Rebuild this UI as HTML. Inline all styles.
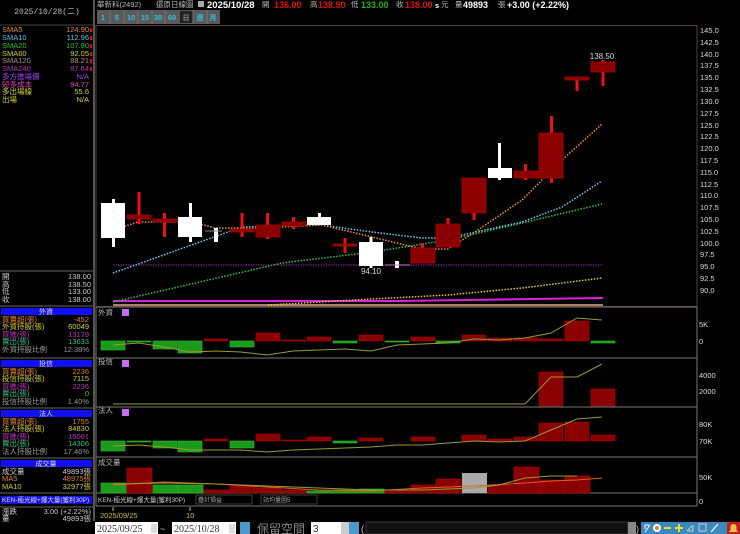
<!DOCTYPE html>
<html><head><meta charset="utf-8"><style>
html,body{margin:0;padding:0;background:#000;width:740px;height:534px;overflow:hidden}
svg{display:block}
text{font-family:"Liberation Sans","Noto Sans CJK TC",sans-serif;font-size:7.5px}
.m{font-family:"Liberation Mono","Noto Sans CJK TC",monospace}
</style></head><body>
<svg width="740" height="534" viewBox="0 0 740 534" xmlns="http://www.w3.org/2000/svg">
<rect width="740" height="534" fill="#000"/>
<!-- left panel separators -->
<rect x="93" y="0" width="2" height="521" fill="#555"/>
<text x="47" y="14" fill="#bbb" text-anchor="middle" class="m" style="font-size:8px">2025/10/28(二)</text>
<line x1="0" y1="25" x2="93" y2="25" stroke="#444"/>
<g class="m" style="font-size:7px">
<text x="2" y="32" fill="#e09040">SMA5</text><text x="89" y="32" fill="#e09040" text-anchor="end">124.90</text>
<text x="2" y="40" fill="#60c0e0">SMA10</text><text x="89" y="40" fill="#60c0e0" text-anchor="end">112.96</text>
<text x="2" y="48" fill="#30c030">SMA20</text><text x="89" y="48" fill="#30c030" text-anchor="end">107.80</text>
<text x="2" y="56" fill="#d0d030">SMA60</text><text x="89" y="56" fill="#d0d030" text-anchor="end">92.05</text>
<text x="2" y="63" fill="#b09080">SMA120</text><text x="89" y="63" fill="#b09080" text-anchor="end">88.21</text>
<text x="2" y="71" fill="#c030c0">SMA240</text><text x="89" y="71" fill="#c030c0" text-anchor="end">87.64</text>
<text x="2" y="79" fill="#a040f0">多方進場價</text><text x="89" y="79" fill="#a040f0" text-anchor="end">N/A</text>
<text x="2" y="87" fill="#e040c0">短多成本</text><text x="89" y="87" fill="#e040c0" text-anchor="end">94.77</text>
<text x="2" y="94" fill="#d0d030">多出場線</text><text x="89" y="94" fill="#d0d030" text-anchor="end">55.6</text>
<text x="2" y="102" fill="#d0d030">出場</text><text x="89" y="102" fill="#d0d030" text-anchor="end">N/A</text>
</g>
<g fill="#e00"><rect x="90" y="28" width="2" height="4"/><rect x="90" y="36" width="2" height="4"/><rect x="90" y="44" width="2" height="4"/><rect x="90" y="52" width="2" height="4"/><rect x="90" y="59" width="2" height="4"/><rect x="90" y="67" width="2" height="4"/></g>
<line x1="0" y1="271" x2="93" y2="271" stroke="#666"/>
<g class="m" style="font-size:7px" fill="#ccc">
<text x="2" y="279">開</text><text x="91" y="279" text-anchor="end">138.00</text>
<text x="2" y="287">高</text><text x="91" y="287" text-anchor="end">138.50</text>
<text x="2" y="294">低</text><text x="91" y="294" text-anchor="end">133.00</text>
<text x="2" y="302">收</text><text x="91" y="302" text-anchor="end">138.00</text>
</g>
<line x1="0" y1="306" x2="93" y2="306" stroke="#666"/>
<rect x="1" y="308" width="91" height="7" fill="#1010f0"/><text x="46" y="314" fill="#ddd" text-anchor="middle" style="font-size:7px">外資</text>
<g class="m" style="font-size:7px">
<text x="2" y="322" fill="#e08030">買賣超(張)</text><text x="89" y="322" fill="#e08030" text-anchor="end">-452</text>
<text x="2" y="329" fill="#d0d030">外資持股(張)</text><text x="89" y="329" fill="#d0d030" text-anchor="end">60049</text>
<text x="2" y="337" fill="#c030c0">買進(張)</text><text x="89" y="337" fill="#c030c0" text-anchor="end">13179</text>
<text x="2" y="344" fill="#30c080">賣出(張)</text><text x="89" y="344" fill="#30c080" text-anchor="end">13633</text>
<text x="2" y="352" fill="#999">外資持股比例</text><text x="89" y="352" fill="#999" text-anchor="end">12.38%</text>
</g>
<line x1="0" y1="358" x2="93" y2="358" stroke="#666"/>
<rect x="1" y="360" width="91" height="7" fill="#1010f0"/><text x="46" y="366" fill="#ddd" text-anchor="middle" style="font-size:7px">投信</text>
<g class="m" style="font-size:7px">
<text x="2" y="374" fill="#e08030">買賣超(張)</text><text x="89" y="374" fill="#e08030" text-anchor="end">2236</text>
<text x="2" y="381" fill="#d0d030">投信持股(張)</text><text x="89" y="381" fill="#d0d030" text-anchor="end">7115</text>
<text x="2" y="389" fill="#c030c0">買進(張)</text><text x="89" y="389" fill="#c030c0" text-anchor="end">2236</text>
<text x="2" y="396" fill="#30c080">賣出(張)</text><text x="89" y="396" fill="#30c080" text-anchor="end">0</text>
<text x="2" y="404" fill="#999">投信持股比例</text><text x="89" y="404" fill="#999" text-anchor="end">1.40%</text>
</g>
<line x1="0" y1="408" x2="93" y2="408" stroke="#666"/>
<rect x="1" y="410" width="91" height="7" fill="#1010f0"/><text x="46" y="416" fill="#ddd" text-anchor="middle" style="font-size:7px">法人</text>
<g class="m" style="font-size:7px">
<text x="2" y="424" fill="#e08030">買賣超(張)</text><text x="89" y="424" fill="#e08030" text-anchor="end">1755</text>
<text x="2" y="431" fill="#d0d030">法人持股(張)</text><text x="89" y="431" fill="#d0d030" text-anchor="end">84830</text>
<text x="2" y="439" fill="#c030c0">買進(張)</text><text x="89" y="439" fill="#c030c0" text-anchor="end">16061</text>
<text x="2" y="446" fill="#30c080">賣出(張)</text><text x="89" y="446" fill="#30c080" text-anchor="end">14306</text>
<text x="2" y="454" fill="#999">法人持股比例</text><text x="89" y="454" fill="#999" text-anchor="end">17.46%</text>
</g>
<line x1="0" y1="458" x2="93" y2="458" stroke="#666"/>
<rect x="1" y="460" width="91" height="7" fill="#1010f0"/><text x="46" y="466" fill="#ddd" text-anchor="middle" style="font-size:7px">成交量</text>
<g class="m" style="font-size:7px">
<text x="2" y="474" fill="#ccc">成交量</text><text x="91" y="474" fill="#ccc" text-anchor="end">49893張</text>
<text x="2" y="481" fill="#e08030">MA5</text><text x="91" y="481" fill="#e08030" text-anchor="end">48975張</text>
<text x="2" y="489" fill="#d0d030">MA10</text><text x="91" y="489" fill="#d0d030" text-anchor="end">32977張</text>
</g>
<line x1="0" y1="493" x2="93" y2="493" stroke="#666"/>
<rect x="1" y="496" width="91" height="8" fill="#1010e0"/><text x="2" y="502" fill="#ddd" style="font-size:6.5px">KEN-極光線+爆大量(獲利30P)</text>
<line x1="0" y1="507" x2="93" y2="507" stroke="#666"/>
<g class="m" style="font-size:7px" fill="#ccc">
<text x="2" y="514">漲跌</text><text x="91" y="514" text-anchor="end">3.00 (+2.22%)</text>
<text x="2" y="521">量</text><text x="91" y="521" text-anchor="end">49893張</text>
</g>

<!-- top bar -->
<g style="font-size:7.5px">
<text x="97" y="7" fill="#bbb">華新科(2492)</text>
<text x="156" y="7" fill="#bbb">還原日線圖</text>
<rect x="198" y="1" width="6" height="6" fill="#aaa"/>
<text x="207" y="8" fill="#fff" style="font-size:9.5px;font-weight:bold">2025/10/28</text>
<text x="262" y="7" fill="#bbb">開</text><text x="274" y="8" fill="#e01010" style="font-size:9px;font-weight:bold">136.00</text>
<text x="310" y="7" fill="#bbb">高</text><text x="318" y="8" fill="#e01010" style="font-size:9px;font-weight:bold">138.50</text>
<text x="351" y="7" fill="#bbb">低</text><text x="361" y="8" fill="#20b020" style="font-size:9px;font-weight:bold">133.00</text>
<text x="396" y="7" fill="#bbb">收</text><text x="405" y="8" fill="#e01010" style="font-size:9px;font-weight:bold">138.00</text>
<text x="435" y="8" fill="#fff" style="font-weight:bold">s</text><text x="441" y="7" fill="#bbb">元</text>
<text x="455" y="7" fill="#bbb">量</text><text x="463" y="8" fill="#fff" style="font-size:9px;font-weight:bold">49893</text>
<text x="498" y="7" fill="#bbb">張</text>
<text x="507" y="8" fill="#fff" style="font-size:9px;font-weight:bold">+3.00 (+2.22%)</text>
</g>
<!-- buttons -->
<rect x="97" y="10" width="123" height="14" fill="#5a5a5a"/>
<g fill="#30c0e0" style="font-size:8px;font-weight:bold" text-anchor="middle">
<text x="103" y="20">1</text><text x="117" y="20">5</text><text x="131" y="20">10</text><text x="145" y="20">15</text><text x="158" y="20">30</text><text x="172" y="20">60</text>
<rect x="180" y="11" width="13" height="12" fill="#222"/><text x="186" y="20" fill="#888" style="font-size:7px">日</text>
<text x="200" y="20" style="font-size:7px">週</text><text x="213" y="20" style="font-size:7px">月</text>
</g>
<g stroke="#777"><line x1="110" y1="10" x2="110" y2="24"/><line x1="124" y1="10" x2="124" y2="24"/><line x1="138" y1="10" x2="138" y2="24"/><line x1="152" y1="10" x2="152" y2="24"/><line x1="165" y1="10" x2="165" y2="24"/><line x1="193" y1="10" x2="193" y2="24"/><line x1="207" y1="10" x2="207" y2="24"/></g>

<!-- frames -->
<rect x="96" y="25.5" width="601" height="281" fill="none" stroke="#5a3a4a"/>
<g stroke="#777"><line x1="96" y1="307" x2="697" y2="307"/><line x1="96" y1="358" x2="697" y2="358"/><line x1="96" y1="407" x2="697" y2="407"/><line x1="96" y1="457" x2="697" y2="457"/><line x1="96" y1="493" x2="697" y2="493"/><line x1="96" y1="506" x2="697" y2="506"/><line x1="96" y1="307" x2="96" y2="506"/><line x1="697" y1="307" x2="697" y2="506"/></g>

<!-- price axis -->
<g fill="#ddd" style="font-size:8px" class="m">
<text x="700" y="33">145.0</text><text x="700" y="45">142.5</text><text x="700" y="57">140.0</text><text x="700" y="68">137.5</text><text x="700" y="80">135.0</text><text x="700" y="92">132.5</text><text x="700" y="104">130.0</text><text x="700" y="116">127.5</text><text x="700" y="128">125.0</text><text x="700" y="139">122.5</text><text x="700" y="151">120.0</text><text x="700" y="163">117.5</text><text x="700" y="175">115.0</text><text x="700" y="187">112.5</text><text x="700" y="198">110.0</text><text x="700" y="210">107.5</text><text x="700" y="222">105.0</text><text x="700" y="234">102.5</text><text x="700" y="246">100.0</text><text x="700" y="257">97.5</text><text x="700" y="269">95.0</text><text x="700" y="281">92.5</text><text x="700" y="293">90.0</text>
<text x="699" y="327">5K</text><text x="699" y="344">0</text>
<text x="699" y="378">4000</text><text x="699" y="394">2000</text>
<text x="699" y="427">80K</text><text x="699" y="444">70K</text>
<text x="699" y="480">50K</text><text x="699" y="504">0</text>
</g>

<!-- MA lines -->
<line x1="113" y1="265" x2="603" y2="265" stroke="#a020c0" stroke-dasharray="1.5 1"/>
<line x1="113" y1="305" x2="603" y2="305" stroke="#b08060" stroke-width="2"/>
<polyline points="113,301 400,301 603,298" fill="none" stroke="#e020e0" stroke-width="2"/>
<g fill="none" stroke-width="1.5" stroke-dasharray="1.5 1.5">
<polyline stroke="#e0d020" points="268,305 372,299 448,295 522,288 602,278"/>
<polyline stroke="#30c040" points="113,302 282,263 372,252 448,240 522,223 602,204"/>
<polyline stroke="#70c8f0" points="113,273 242,227 322,225 372,232 422,238 448,238 522,222 562,207 602,181"/>
<polyline stroke="#f09030" points="113,230 138,222 192,222 215,228 262,228 322,225 372,237 422,249 448,249 475,232 522,200 562,160 602,124"/>
</g>

<!-- candles -->
<g fill="#f01010">
<rect x="137.5" y="192" width="3" height="32"/><rect x="163" y="213" width="3" height="24"/><rect x="240.5" y="213" width="3" height="24"/><rect x="266" y="213" width="3" height="26"/><rect x="292" y="217" width="3" height="12"/><rect x="343.5" y="238" width="3" height="15"/><rect x="421" y="243" width="3" height="20"/><rect x="446.5" y="218" width="3" height="29"/><rect x="472.5" y="178" width="3" height="42"/><rect x="524" y="164" width="3" height="16"/><rect x="550" y="116" width="3" height="67"/><rect x="575.5" y="77" width="3" height="14"/><rect x="601.5" y="60" width="3" height="26"/>
</g>
<g fill="#fff">
<rect x="112" y="199" width="3" height="48"/><rect x="189" y="203" width="3" height="39"/><rect x="318" y="213" width="3" height="12"/><rect x="369.5" y="237" width="3" height="31"/><rect x="498" y="143" width="3" height="37"/>
<rect x="101" y="203" width="24" height="35"/><rect x="178" y="217" width="24" height="20"/><rect x="214" y="228" width="4" height="14"/><rect x="307" y="217" width="24" height="8"/><rect x="359" y="242" width="24" height="24"/><rect x="395" y="261" width="4" height="7"/><rect x="488" y="168" width="24" height="10"/>
</g>
<line x1="205" y1="231" x2="222" y2="231" stroke="#888"/>
<line x1="385" y1="265" x2="410" y2="265" stroke="#d070d0"/>
<g fill="#8a0000" stroke="#b00000" stroke-width="0.8">
<rect x="127" y="215" width="24" height="4"/><rect x="153" y="219" width="24" height="3"/><rect x="230" y="229" width="24" height="3"/><rect x="256" y="225" width="24" height="12"/><rect x="282" y="222" width="24" height="4"/><rect x="333" y="244" width="24" height="2"/><rect x="411" y="248" width="24" height="15"/><rect x="436" y="224" width="24" height="23"/><rect x="462" y="178" width="24" height="35"/><rect x="514" y="171" width="24" height="7"/><rect x="539" y="133" width="24" height="45"/><rect x="565" y="77" width="24" height="3"/><rect x="591" y="62" width="24" height="10"/>
</g>
<text x="371" y="274" fill="#ddd" text-anchor="middle" style="font-size:8px">94.10</text>
<text x="602" y="59" fill="#ddd" text-anchor="middle" style="font-size:8px">138.50</text>

<!-- panel labels -->
<g fill="#bbb" style="font-size:6.5px"><text x="98" y="315">外資</text><text x="98" y="364">投信</text><text x="98" y="413">法人</text><text x="98" y="465">成交量</text></g>
<g fill="#c070f0"><rect x="122" y="309" width="7" height="7"/><rect x="122" y="360" width="7" height="7"/><rect x="122" y="409" width="7" height="7"/></g>

<!-- 外資 bars (zero 341) -->
<g fill="#1a9a1a" stroke="#30c030" stroke-width="0.6">
<rect x="101" y="341" width="24" height="9"/><rect x="127" y="341" width="24" height="1"/><rect x="153" y="341" width="24" height="8"/><rect x="178" y="341" width="24" height="12"/><rect x="230" y="341" width="24" height="6"/><rect x="333" y="341" width="24" height="2"/><rect x="385" y="341" width="24" height="1"/><rect x="436" y="341" width="24" height="2"/><rect x="591" y="341" width="24" height="2"/>
</g>
<g fill="#8a0000" stroke="#b00000" stroke-width="0.6">
<rect x="204" y="339" width="24" height="2"/><rect x="256" y="333" width="24" height="8"/><rect x="282" y="340" width="24" height="1"/><rect x="307" y="337" width="24" height="4"/><rect x="359" y="335" width="24" height="6"/><rect x="411" y="337" width="24" height="4"/><rect x="462" y="335" width="24" height="6"/><rect x="488" y="338" width="24" height="3"/><rect x="514" y="338" width="24" height="3"/><rect x="539" y="339" width="24" height="2"/><rect x="565" y="321" width="24" height="20"/>
</g>
<polyline fill="none" stroke="#9a9a30" points="113,345 139,343 164,347 190,352 216,351 241,352 267,355 293,351 319,350 345,349 371,351 397,345 422,344 448,343 474,339 499,340 525,338 551,333 577,318 602,320"/>

<!-- 投信 -->
<g fill="#8a0000" stroke="#b00000" stroke-width="0.6"><rect x="539" y="372" width="24" height="34"/><rect x="591" y="389" width="24" height="17"/></g>
<polyline fill="none" stroke="#9a9a30" points="113,404 525,404 551,377 577,377 602,364"/>

<!-- 法人 (zero 441) -->
<g fill="#1a9a1a" stroke="#30c030" stroke-width="0.6">
<rect x="101" y="441" width="24" height="10"/><rect x="127" y="441" width="24" height="1"/><rect x="153" y="441" width="24" height="7"/><rect x="178" y="441" width="24" height="11"/><rect x="230" y="441" width="24" height="7"/><rect x="333" y="441" width="24" height="2"/>
</g>
<g fill="#8a0000" stroke="#b00000" stroke-width="0.6">
<rect x="204" y="439" width="24" height="2"/><rect x="256" y="434" width="24" height="7"/><rect x="282" y="440" width="24" height="1"/><rect x="307" y="437" width="24" height="4"/><rect x="359" y="438" width="24" height="3"/><rect x="411" y="437" width="24" height="4"/><rect x="462" y="435" width="24" height="6"/><rect x="488" y="439" width="24" height="2"/><rect x="514" y="437" width="24" height="4"/><rect x="539" y="423" width="24" height="18"/><rect x="565" y="422" width="24" height="19"/><rect x="591" y="435" width="24" height="6"/>
</g>
<polyline fill="none" stroke="#9a9a30" points="113,446 139,445 164,447 190,450 216,450 241,450 267,452 293,450 319,449 345,448 371,447 397,445 422,445 448,443 474,441 499,442 525,441 551,430 577,419 602,417"/>

<!-- volume -->
<g stroke="#c00000" stroke-width="0.6" fill="#8a0000">
<rect x="127" y="468" width="25" height="25"/><rect x="204" y="490" width="25" height="3"/><rect x="230" y="486" width="25" height="7"/><rect x="256" y="488" width="25" height="5"/><rect x="282" y="490" width="25" height="3"/><rect x="359" y="492" width="25" height="1"/><rect x="385" y="491" width="25" height="2"/><rect x="411" y="485" width="25" height="8"/><rect x="436" y="479" width="25" height="14"/><rect x="488" y="485" width="25" height="8"/><rect x="514" y="467" width="25" height="26"/><rect x="539" y="480" width="25" height="13"/><rect x="565" y="476" width="25" height="17"/>
</g>
<g fill="#1a9a1a" stroke="#30c030" stroke-width="0.6">
<rect x="101" y="483" width="25" height="10"/><rect x="153" y="485" width="25" height="8"/><rect x="178" y="485" width="25" height="8"/><rect x="307" y="491" width="25" height="2"/><rect x="333" y="490" width="25" height="3"/><rect x="359" y="489" width="25" height="4"/>
</g>
<rect x="462" y="473" width="25" height="20" fill="#aaa"/>
<polyline fill="none" stroke="#e06020" points="113,485 164,482 216,484 267,487 319,490 371,491 422,488 474,486 525,483 551,481 577,480 602,478"/>
<polyline fill="none" stroke="#9a9a30" points="113,484 164,483 216,484 267,486 319,488 371,490 422,490 474,488 499,485 525,478 551,476 577,476"/>
<!-- indicator bar -->
<text x="98" y="502" fill="#ccc" style="font-size:6.5px">KEN-極光線+爆大量(獲利30P)</text>
<rect x="196" y="495" width="56" height="9" fill="#000" stroke="#666" stroke-width="0.6"/><text x="198" y="502" fill="#aaa" style="font-size:6px">疊計損益</text>
<rect x="261" y="495" width="56" height="9" fill="#000" stroke="#666" stroke-width="0.6"/><text x="263" y="502" fill="#aaa" style="font-size:6px">站均量圖5</text>
<!-- dates -->
<g stroke="#cc3"><line x1="113" y1="507" x2="113" y2="511"/><line x1="190" y1="507" x2="190" y2="511"/></g>
<text x="100" y="518" fill="#d0c040" style="font-size:7.5px">2025/09/25</text>
<text x="186" y="518" fill="#d0c040" style="font-size:7.5px">10</text>
<!-- bottom controls -->
<rect x="95" y="522" width="63" height="12" fill="#fff"/><text x="97" y="532" fill="#333" style="font-size:10px;font-family:'Liberation Serif',serif">2025/09/25</text>
<rect x="151" y="524" width="6" height="9" fill="#ddd"/>
<text x="160" y="532" fill="#bbb" style="font-size:9px">~</text>
<rect x="172" y="522" width="64" height="12" fill="#fff"/><text x="174" y="532" fill="#333" style="font-size:10px;font-family:'Liberation Serif',serif">2025/10/28</text>
<rect x="229" y="524" width="6" height="9" fill="#ddd"/>
<rect x="240" y="522" width="10" height="12" fill="#4a9ad0"/>
<text x="257" y="533" fill="#888" style="font-size:12px">保留空間</text>
<rect x="311" y="522" width="30" height="12" fill="#fff"/><text x="313" y="532" fill="#333" style="font-size:10px">3</text>
<rect x="341" y="522" width="8" height="12" fill="#ccc"/>
<rect x="349" y="522" width="10" height="12" fill="#4a9ad0"/>
<text x="361" y="532" fill="#ccc" style="font-size:9px">(</text>
<rect x="366" y="522" width="262" height="12" fill="#111" stroke="#555" stroke-width="0.6"/>
<rect x="628" y="522" width="8" height="12" fill="#888"/>
<text x="636" y="532" fill="#ccc" style="font-size:9px">)</text>
<rect x="641" y="522" width="86" height="12" fill="#3a8ac0"/>
<rect x="727" y="522" width="13" height="12" fill="#c02020"/>
<g>
<path d="M645 532 L650 525 M645 525 h4 M645 525 v4" stroke="#fff" fill="none"/>
<circle cx="657" cy="528" r="4" fill="#fff"/><circle cx="657" cy="528" r="2" fill="#f08020"/>
<rect x="664" y="527" width="7" height="2" fill="#f0e020"/>
<rect x="675" y="527" width="8" height="2" fill="#f0e020"/><rect x="678" y="524" width="2" height="8" fill="#f0e020"/>
<path d="M687 531 h6 v-6 M687 531 l5 -5" stroke="#ccc" fill="none"/>
<rect x="699" y="524" width="7" height="7" fill="none" stroke="#ccc"/>
<path d="M711 532 L718 524" stroke="#ddd" stroke-width="1.5"/>
<path d="M729 532 h9 l-1.5 -2 v-3 a3 3 0 0 0 -6 0 v3 z" fill="#f0c040"/>
</g>
</svg>
</body></html>
